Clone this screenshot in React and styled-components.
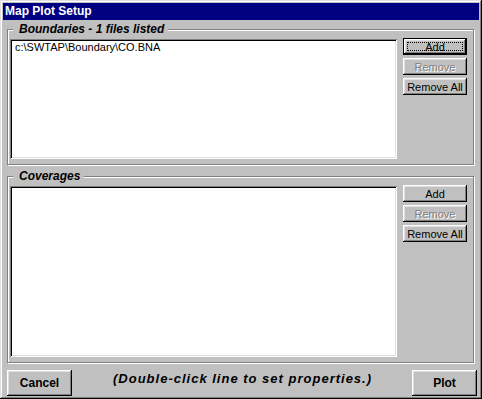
import React from 'react';
import styled, { createGlobalStyle } from 'styled-components';

const GlobalStyle = createGlobalStyle`
  html, body {
    margin: 0;
    padding: 0;
    background: #c0c0c0;
  }
  * {
    box-sizing: border-box;
  }
`;

const raised = `
  inset -1px -1px #000,
  inset 1px 1px #fff,
  inset -2px -2px #808080,
  inset 2px 2px #dfdfdf
`;

const Window = styled.div`
  width: 482px;
  height: 399px;
  padding: 3px;
  background: #c0c0c0;
  box-shadow: inset -1px -1px #000, inset 1px 1px #dfdfdf,
    inset -2px -2px #808080, inset 2px 2px #fff;
  display: flex;
  flex-direction: column;
  font-family: "Liberation Sans", Arial, sans-serif;
  font-size: 11px;
  color: #000;
`;

const TitleBar = styled.div`
  height: 17px;
  line-height: 17px;
  padding-left: 2px;
  background: #000080;
  color: #fff;
  font-weight: bold;
  font-size: 12px;
`;

const GroupBox = styled.fieldset`
  display: flex;
  gap: 6px;
  min-width: 0;
  min-height: 0;
  margin: ${(p) => p.$top}px 5px 0 4px;
  padding: 3px 6px 5px 2px;
  border: 1px solid #808080;
  box-shadow: inset 1px 1px #fff, 1px 1px #fff;
  flex: ${(p) => (p.$height ? `0 0 ${p.$height}px` : '1 1 auto')};
`;

const Legend = styled.legend`
  margin-left: 3px;
  padding: 0 4px 0 6px;
  background: #c0c0c0;
  font-size: 12px;
  font-weight: bold;
  font-style: italic;
  line-height: 13px;
`;

const ListBox = styled.div`
  flex: 1;
  background: #fff;
  padding: 2px 4px 2px 5px;
  line-height: 13px;
  box-shadow: inset 1px 1px #808080, inset -1px -1px #fff,
    inset 2px 2px #000, inset -2px -2px #dfdfdf;
`;

const ButtonColumn = styled.div`
  width: 64px;
  margin-top: -1px;
  display: flex;
  flex-direction: column;
  gap: 3px;
`;

const Button = styled.div`
  position: relative;
  height: 17px;
  display: flex;
  align-items: center;
  justify-content: center;
  background: #c0c0c0;
  font-size: 11px;
  color: ${(p) => (p.$disabled ? '#808080' : '#000')};
  text-shadow: ${(p) => (p.$disabled ? '1px 1px #fff' : 'none')};
  box-shadow: ${(p) =>
    p.$default
      ? `inset 0 0 0 1px #000, inset -2px -2px #000, inset 2px 2px #fff,
         inset -3px -3px #808080, inset 3px 3px #dfdfdf`
      : raised};

  ${(p) =>
    p.$default &&
    `
    &::after {
      content: '';
      position: absolute;
      inset: 4px;
      border: 1px dotted #000;
    }
  `}
`;

const BottomRow = styled.div`
  height: 26px;
  margin-top: 7px;
  padding: 0 2px 0 4px;
  display: flex;
  align-items: flex-start;
`;

const BigButton = styled.div`
  width: 65px;
  height: 26px;
  display: flex;
  align-items: center;
  justify-content: center;
  font-size: 12px;
  font-weight: bold;
  box-shadow: ${raised};
  margin-left: ${(p) => (p.$right ? 'auto' : '0')};
`;

const Hint = styled.div`
  margin-left: 41px;
  padding-top: 1px;
  font-size: 13px;
  font-weight: bold;
  font-style: italic;
  letter-spacing: 1px;
  line-height: 15px;
`;

const FileGroup = ({ title, files, height, top, focused }) => (
  <GroupBox $height={height} $top={top}>
    <Legend>{title}</Legend>
    <ListBox>
      {files.map((f) => (
        <div key={f}>{f}</div>
      ))}
    </ListBox>
    <ButtonColumn>
      <Button $default={focused}>Add</Button>
      <Button $disabled>Remove</Button>
      <Button>Remove All</Button>
    </ButtonColumn>
  </GroupBox>
);

export default function App() {
  return (
    <>
      <GlobalStyle />
      <Window>
        <TitleBar>Map Plot Setup</TitleBar>
        <FileGroup
          title="Boundaries - 1 files listed"
          files={['c:\\SWTAP\\Boundary\\CO.BNA']}
          height={142}
          top={3}
          focused
        />
        <FileGroup title="Coverages" files={[]} top={5} />
        <BottomRow>
          <BigButton>Cancel</BigButton>
          <Hint>(Double-click line to set properties.)</Hint>
          <BigButton $right>Plot</BigButton>
        </BottomRow>
      </Window>
    </>
  );
}
